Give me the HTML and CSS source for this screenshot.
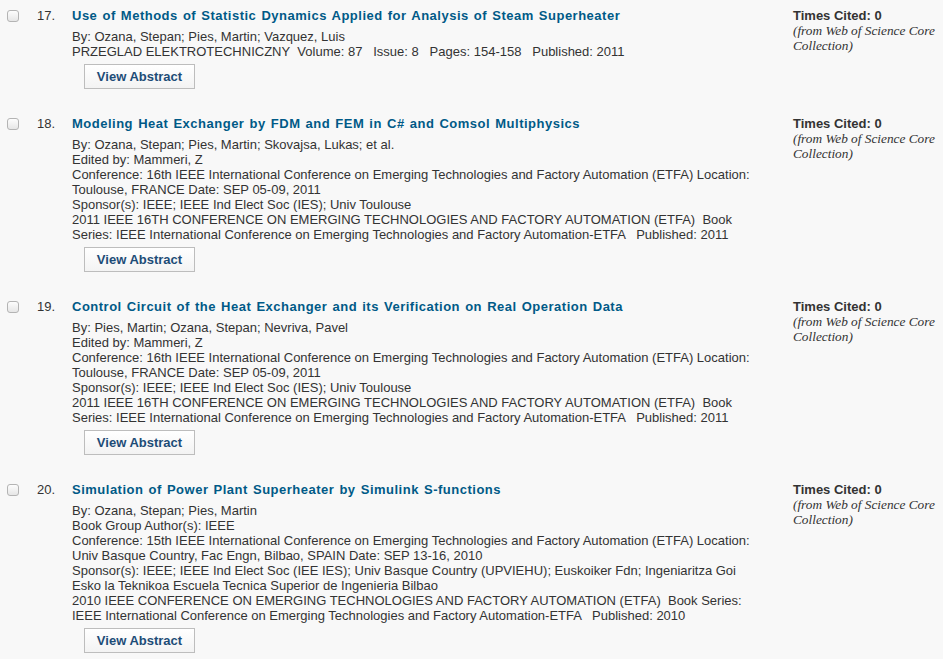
FILE: index.html
```html
<!DOCTYPE html>
<html lang="en">
<head>
    <meta charset="UTF-8">
    <title>Search Results</title>
    <link rel="stylesheet" href="styles.css">
</head>
<body>

<div class="results">

    <div class="record">
        <div class="record-check"><input type="checkbox"></div>
        <div class="record-num">17.</div>
        <div class="record-content">
            <div class="record-title">Use of Methods of Statistic Dynamics Applied for Analysis of Steam Superheater</div>
            <div class="record-info">
                <div>By: Ozana, Stepan; Pies, Martin; Vazquez, Luis</div>
                <div>PRZEGLAD ELEKTROTECHNICZNY&nbsp; Volume: 87 &nbsp; Issue: 8 &nbsp; Pages: 154-158 &nbsp; Published: 2011</div>
            </div>
            <button type="button" class="abstract-btn">View Abstract</button>
        </div>
        <div class="record-cited">
            <div class="cited-count">Times Cited: 0</div>
            <div class="cited-source">(from Web of Science Core Collection)</div>
        </div>
    </div>

    <div class="record">
        <div class="record-check"><input type="checkbox"></div>
        <div class="record-num">18.</div>
        <div class="record-content">
            <div class="record-title">Modeling Heat Exchanger by FDM and FEM in C# and Comsol Multiphysics</div>
            <div class="record-info">
                <div>By: Ozana, Stepan; Pies, Martin; Skovajsa, Lukas; et al.</div>
                <div>Edited by: Mammeri, Z</div>
                <div>Conference: 16th IEEE International Conference on Emerging Technologies and Factory Automation (ETFA) Location: Toulouse, FRANCE Date: SEP 05-09, 2011</div>
                <div>Sponsor(s): IEEE; IEEE Ind Elect Soc (IES); Univ Toulouse</div>
                <div>2011 IEEE 16TH CONFERENCE ON EMERGING TECHNOLOGIES AND FACTORY AUTOMATION (ETFA)&nbsp; Book Series: IEEE International Conference on Emerging Technologies and Factory Automation-ETFA &nbsp; Published: 2011</div>
            </div>
            <button type="button" class="abstract-btn">View Abstract</button>
        </div>
        <div class="record-cited">
            <div class="cited-count">Times Cited: 0</div>
            <div class="cited-source">(from Web of Science Core Collection)</div>
        </div>
    </div>

    <div class="record">
        <div class="record-check"><input type="checkbox"></div>
        <div class="record-num">19.</div>
        <div class="record-content">
            <div class="record-title">Control Circuit of the Heat Exchanger and its Verification on Real Operation Data</div>
            <div class="record-info">
                <div>By: Pies, Martin; Ozana, Stepan; Nevriva, Pavel</div>
                <div>Edited by: Mammeri, Z</div>
                <div>Conference: 16th IEEE International Conference on Emerging Technologies and Factory Automation (ETFA) Location: Toulouse, FRANCE Date: SEP 05-09, 2011</div>
                <div>Sponsor(s): IEEE; IEEE Ind Elect Soc (IES); Univ Toulouse</div>
                <div>2011 IEEE 16TH CONFERENCE ON EMERGING TECHNOLOGIES AND FACTORY AUTOMATION (ETFA)&nbsp; Book Series: IEEE International Conference on Emerging Technologies and Factory Automation-ETFA &nbsp; Published: 2011</div>
            </div>
            <button type="button" class="abstract-btn">View Abstract</button>
        </div>
        <div class="record-cited">
            <div class="cited-count">Times Cited: 0</div>
            <div class="cited-source">(from Web of Science Core Collection)</div>
        </div>
    </div>

    <div class="record">
        <div class="record-check"><input type="checkbox"></div>
        <div class="record-num">20.</div>
        <div class="record-content">
            <div class="record-title">Simulation of Power Plant Superheater by Simulink S-functions</div>
            <div class="record-info">
                <div>By: Ozana, Stepan; Pies, Martin</div>
                <div>Book Group Author(s): IEEE</div>
                <div>Conference: 15th IEEE International Conference on Emerging Technologies and Factory Automation (ETFA) Location: Univ Basque Country, Fac Engn, Bilbao, SPAIN Date: SEP 13-16, 2010</div>
                <div>Sponsor(s): IEEE; IEEE Ind Elect Soc (IEE IES); Univ Basque Country (UPVIEHU); Euskoiker Fdn; Ingeniaritza Goi Esko la Teknikoa Escuela Tecnica Superior de Ingenieria Bilbao</div>
                <div>2010 IEEE CONFERENCE ON EMERGING TECHNOLOGIES AND FACTORY AUTOMATION (ETFA)&nbsp; Book Series: IEEE International Conference on Emerging Technologies and Factory Automation-ETFA &nbsp; Published: 2010</div>
            </div>
            <button type="button" class="abstract-btn">View Abstract</button>
        </div>
        <div class="record-cited">
            <div class="cited-count">Times Cited: 0</div>
            <div class="cited-source">(from Web of Science Core Collection)</div>
        </div>
    </div>

</div>

</body>
</html>
```

FILE: styles.css
```css
body {
    margin: 0;
    background-color: #f8f8f8;
    font-family: "Liberation Sans", Arial, sans-serif;
    font-size: 13px;
    color: #333;
}

.results {
    padding-top: 7px;
}

.record {
    display: grid;
    grid-template-columns: 37px 35px 721px 150px;
    margin-bottom: 26px;
}

.record-check input {
    appearance: none;
    -webkit-appearance: none;
    display: block;
    width: 12px;
    height: 12px;
    margin: 3px 0 0 7px;
    border: 1px solid #b4b4b4;
    border-radius: 3px;
    background: linear-gradient(#fdfdfd, #e6e6e6);
}

.record-num {
    line-height: 18px;
}

.record-content {
    padding-right: 33px;
}

.record-title {
    font-weight: bold;
    line-height: 18px;
    color: #005a87;
    letter-spacing: 0.5px;
    word-spacing: 1px;
}

.record-info {
    margin-top: 4px;
    line-height: 15px;
}

.abstract-btn {
    display: block;
    margin: 5px 0 0 12px;
    width: 111px;
    height: 25px;
    padding: 0;
    font-family: "Liberation Sans", Arial, sans-serif;
    font-size: 13px;
    font-weight: bold;
    color: #1d4c77;
    background: linear-gradient(#ffffff, #f3f3f3);
    border: 1px solid #bdbdbd;
    border-radius: 0;
    cursor: pointer;
}

.record-cited {
    padding-top: 1px;
    line-height: 15px;
}

.cited-count {
    font-weight: bold;
}

.cited-source {
    font-family: "Liberation Serif", Georgia, serif;
    font-style: italic;
    font-size: 13.3px;
}
```
